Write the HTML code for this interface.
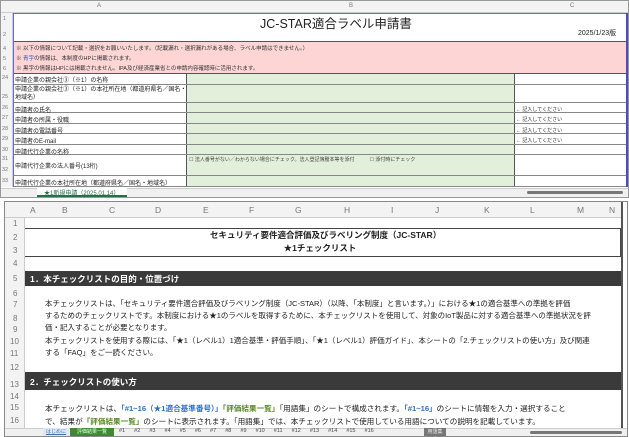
<!DOCTYPE html>
<html><head><meta charset="utf-8">
<style>
*{margin:0;padding:0;box-sizing:border-box}
body{width:629px;height:437px;background:#fff;position:relative;overflow:hidden;font-family:"Liberation Sans","Noto Sans CJK JP",sans-serif;color:#222}
.a{position:absolute;white-space:nowrap}
.hl{position:absolute;background:#888;height:1px}
.vl{position:absolute;background:#888;width:1px}
</style></head><body>

<!-- TOP PANEL -->
<div class="a" style="left:0;top:0;width:629px;height:198px;border:1px solid #999;background:#fff"></div>
<div class="a" style="left:1px;top:1px;width:627px;height:12px;background:#f3f3f3;border-bottom:1px solid #ccc"></div>
<div class="a" style="left:1px;top:13px;width:12px;height:174px;background:#f3f3f3;border-right:1px solid #ccc"></div>
<div class="a" style="left:97px;top:3px;font-size:6px;color:#777">A</div>
<div class="a" style="left:349px;top:3px;font-size:6px;color:#777">B</div>
<div class="a" style="left:570px;top:3px;font-size:6px;color:#777">C</div>
<div class="vl" style="left:13px;top:13px;height:174px;background:#6a6ad0"></div>
<div class="vl" style="left:626px;top:13px;height:174px;background:#4a4ad0;width:2px"></div>
<div class="a" style="left:14px;top:13px;width:612px;height:1px;background:#6a6ad0"></div>
<div class="a" style="left:260px;top:13px;font-size:12.5px;color:#222">JC-STAR適合ラベル申請書</div>
<div class="a" style="left:578px;top:28px;font-size:7px">2025/1/23版</div>
<div class="hl" style="left:14px;top:41px;width:612px;background:#555"></div>
<div class="a" style="left:14px;top:42px;width:612px;height:31px;background:#fdd5d5"></div>
<div class="a" style="left:16px;top:44px;font-size:5.5px;color:#333">※ 以下の情報について記載・選択をお願いいたします。（記載漏れ・選択漏れがある場合、ラベル申請はできません。）</div>
<div class="a" style="left:16px;top:54px;font-size:5.5px;color:#333">※ <span style="color:#1a5fd0">青字</span>の情報は、本制度のHPに掲載されます。</div>
<div class="a" style="left:16px;top:64px;font-size:5.5px;color:#333">※ 黒字の情報はHPには掲載されません。IPA及び経済産業省との申請内容確認時に活用されます。</div>
<div class="a" style="left:186px;top:73px;width:328px;height:114px;background:#e2efda"></div>
<div class="vl" style="left:186px;top:73px;height:114px;background:#555"></div>
<div class="vl" style="left:514px;top:73px;height:114px;background:#555"></div>
<div class="hl" style="left:14px;top:73px;width:612px;background:#555"></div>
<div class="hl" style="left:14px;top:84px;width:612px"></div>
<div class="hl" style="left:14px;top:102px;width:612px"></div>
<div class="hl" style="left:14px;top:112px;width:612px"></div>
<div class="hl" style="left:14px;top:123px;width:612px"></div>
<div class="hl" style="left:14px;top:133px;width:612px"></div>
<div class="hl" style="left:14px;top:144px;width:612px"></div>
<div class="hl" style="left:14px;top:154px;width:612px"></div>
<div class="hl" style="left:14px;top:175px;width:612px"></div>
<div class="hl" style="left:14px;top:186px;width:612px"></div>
<div class="a" style="left:3px;top:15px;font-size:5.5px;color:#777;line-height:8px">1<br><br>2</div>
<div class="a" style="left:3px;top:44px;font-size:5.5px;color:#777;line-height:10px">4<br>5<br>6</div>
<div class="a" style="left:2px;top:75px;font-size:5.5px;color:#777">24</div>
<div class="a" style="left:2px;top:94px;font-size:5.5px;color:#777">25</div>
<div class="a" style="left:2px;top:105px;font-size:5.5px;color:#777">26</div>
<div class="a" style="left:2px;top:115px;font-size:5.5px;color:#777">27</div>
<div class="a" style="left:2px;top:126px;font-size:5.5px;color:#777">28</div>
<div class="a" style="left:2px;top:136px;font-size:5.5px;color:#777">29</div>
<div class="a" style="left:2px;top:147px;font-size:5.5px;color:#777">30</div>
<div class="a" style="left:2px;top:156px;font-size:5.5px;color:#777">31</div>
<div class="a" style="left:2px;top:167px;font-size:5.5px;color:#777">32</div>
<div class="a" style="left:2px;top:178px;font-size:5.5px;color:#777">33</div>
<div class="a" style="left:15px;top:75px;font-size:6px">申請企業の親会社③（※1）の名称</div>
<div class="a" style="left:15px;top:86px;font-size:6px;line-height:8px">申請企業の親会社③（※1）の本社所在地（都道府県名／国名・<br>地域名）</div>
<div class="a" style="left:15px;top:105px;font-size:6px">申請者の氏名</div>
<div class="a" style="left:15px;top:115px;font-size:6px">申請者の所属・役職</div>
<div class="a" style="left:15px;top:126px;font-size:6px">申請者の電話番号</div>
<div class="a" style="left:15px;top:136px;font-size:6px">申請者のE-mail</div>
<div class="a" style="left:15px;top:147px;font-size:6px">申請代行企業の名称</div>
<div class="a" style="left:15px;top:161px;font-size:6px">申請代行企業の法人番号(13桁)</div>
<div class="a" style="left:15px;top:178px;font-size:6px">申請代行企業の本社所在地（都道府県名／国名・地域名）</div>
<div class="a" style="left:189px;top:156px;font-size:5px;color:#444">☐ 法人番号がない／わからない場合にチェック。法人登記簿謄本等を添付　　　☐ 添付時にチェック</div>
<div class="a" style="left:516px;top:105px;font-size:5px;line-height:10.3px;color:#333">← 記入してください<br>← 記入してください<br>← 記入してください<br>← 記入してください</div>
<div class="a" style="left:1px;top:188px;width:627px;height:9px;background:#f0f0f0;border-top:1px solid #ccc"></div>
<div class="a" style="left:37px;top:188px;width:90px;height:9px;background:#fff;border-bottom:2px solid #217346"></div>
<div class="a" style="left:44px;top:188px;font-size:6px;color:#217346">★1新規申請（2025.01.14）</div>
<div class="a" style="left:527px;top:191px;width:96px;height:3px;background:#777;border-radius:2px"></div>

<!-- BOTTOM PANEL -->
<div class="a" style="left:4px;top:201px;width:624px;height:236px;border:1px solid #888;background:#fff"></div>
<div class="a" style="left:5px;top:202px;width:617px;height:16px;background:#f3f3f3;border-bottom:1px solid #ccc"></div>
<div class="a" style="left:5px;top:218px;width:20px;height:210px;background:#f3f3f3;border-right:1px solid #ccc"></div>
<div class="vl" style="left:621px;top:202px;height:226px;background:#555;width:2px"></div>
<div class="a" style="top:205px;left:0;font-size:8.5px;color:#777;width:629px;height:12px">
<span class="a" style="left:30px">A</span><span class="a" style="left:62px">B</span><span class="a" style="left:109px">C</span><span class="a" style="left:155px">D</span><span class="a" style="left:203px">E</span><span class="a" style="left:249px">F</span><span class="a" style="left:295px">G</span><span class="a" style="left:344px">H</span><span class="a" style="left:391px">I</span><span class="a" style="left:435px">J</span><span class="a" style="left:484px">K</span><span class="a" style="left:530px">L</span><span class="a" style="left:577px">M</span><span class="a" style="left:609px">N</span></div>
<div class="a" style="left:0;top:0;font-size:8px;color:#777">
<span class="a" style="left:13px;top:219px">1</span><span class="a" style="left:13px;top:233px">2</span><span class="a" style="left:13px;top:246px">3</span><span class="a" style="left:13px;top:259px">4</span><span class="a" style="left:13px;top:274px">5</span><span class="a" style="left:13px;top:289px">6</span><span class="a" style="left:13px;top:300px">7</span><span class="a" style="left:13px;top:314px">8</span><span class="a" style="left:13px;top:325px">9</span><span class="a" style="left:10px;top:337px">10</span><span class="a" style="left:10px;top:349px">11</span><span class="a" style="left:10px;top:363px">12</span><span class="a" style="left:10px;top:380px">13</span><span class="a" style="left:10px;top:392px">14</span><span class="a" style="left:10px;top:403px">15</span><span class="a" style="left:10px;top:416px">16</span></div>
<div class="a" style="left:25px;top:228px;width:596px;height:29px;border-top:1px solid #444;border-bottom:1px solid #444;border-right:1px solid #444"></div>
<div class="a" style="left:210px;top:229px;font-size:8.5px;font-weight:bold;line-height:13px;text-align:center;width:220px">セキュリティ要件適合評価及びラベリング制度（JC-STAR）<br>★1チェックリスト</div>
<div class="a" style="left:25px;top:271px;width:596px;height:15px;background:#3a3a3a"></div>
<div class="a" style="left:30px;top:273px;font-size:8.5px;font-weight:bold;color:#fff">1．本チェックリストの目的・位置づけ</div>
<div class="a" style="left:45px;top:298px;font-size:7.5px;line-height:12.2px;color:#222">本チェックリストは、「セキュリティ要件適合評価及びラベリング制度（JC-STAR）（以降、「本制度」と言います。）」における★1の適合基準への準拠を評価<br>するためのチェックリストです。本制度における★1のラベルを取得するために、本チェックリストを使用して、対象のIoT製品に対する適合基準への準拠状況を評<br>価・記入することが必要となります。<br>本チェックリストを使用する際には、「★1（レベル1）1適合基準・評価手順」、「★1（レベル1）評価ガイド」、本シートの「2.チェックリストの使い方」及び関連<br>する「FAQ」をご一読ください。</div>
<div class="a" style="left:25px;top:372px;width:596px;height:18px;background:#3a3a3a"></div>
<div class="a" style="left:30px;top:376px;font-size:8.5px;font-weight:bold;color:#fff">2．チェックリストの使い方</div>
<div class="a" style="left:45px;top:403px;font-size:7.6px;line-height:12.5px;color:#222">本チェックリストは、<b style="color:#2f6fd0">「#1~16（★1適合基準番号）」</b><b style="color:#5a8a2a">「評価結果一覧」</b>「用語集」のシートで構成されます。<b style="color:#2f6fd0">「#1~16」</b>のシートに情報を入力・選択すること<br>で、結果が<b style="color:#5a8a2a">「評価結果一覧」</b>のシートに表示されます。「用語集」では、本チェックリストで使用している用語についての説明を記載しています。</div>
<div class="a" style="left:5px;top:428px;width:622px;height:8px;background:#f0f0f0;border-top:1px solid #ccc"></div>
<div class="a" style="left:43px;top:428px;width:26px;height:8px;background:#dde8f5;font-size:5px;color:#4470b0;text-align:center;text-decoration:underline">はじめに</div>
<div class="a" style="left:70px;top:428px;width:44px;height:8px;background:#3f8a2f;font-size:5px;color:#dfe;text-align:center">評価結果一覧</div>
<div class="a" style="left:119px;top:428px;font-size:5.5px;color:#444;word-spacing:3px">#1 &nbsp;#2 &nbsp;#3 &nbsp;#4 &nbsp;#5 &nbsp;#6 &nbsp;#7 &nbsp;#8 &nbsp;#9 &nbsp;#10 &nbsp;#11 &nbsp;#12 &nbsp;#13 &nbsp;#14 &nbsp;#15 &nbsp;#16</div>
<div class="a" style="left:424px;top:428px;width:22px;height:8px;background:#777;font-size:5px;color:#eee;text-align:center">用語集</div>
<div class="a" style="left:530px;top:431px;width:92px;height:3px;background:#777;border-radius:2px"></div>
</body></html>
